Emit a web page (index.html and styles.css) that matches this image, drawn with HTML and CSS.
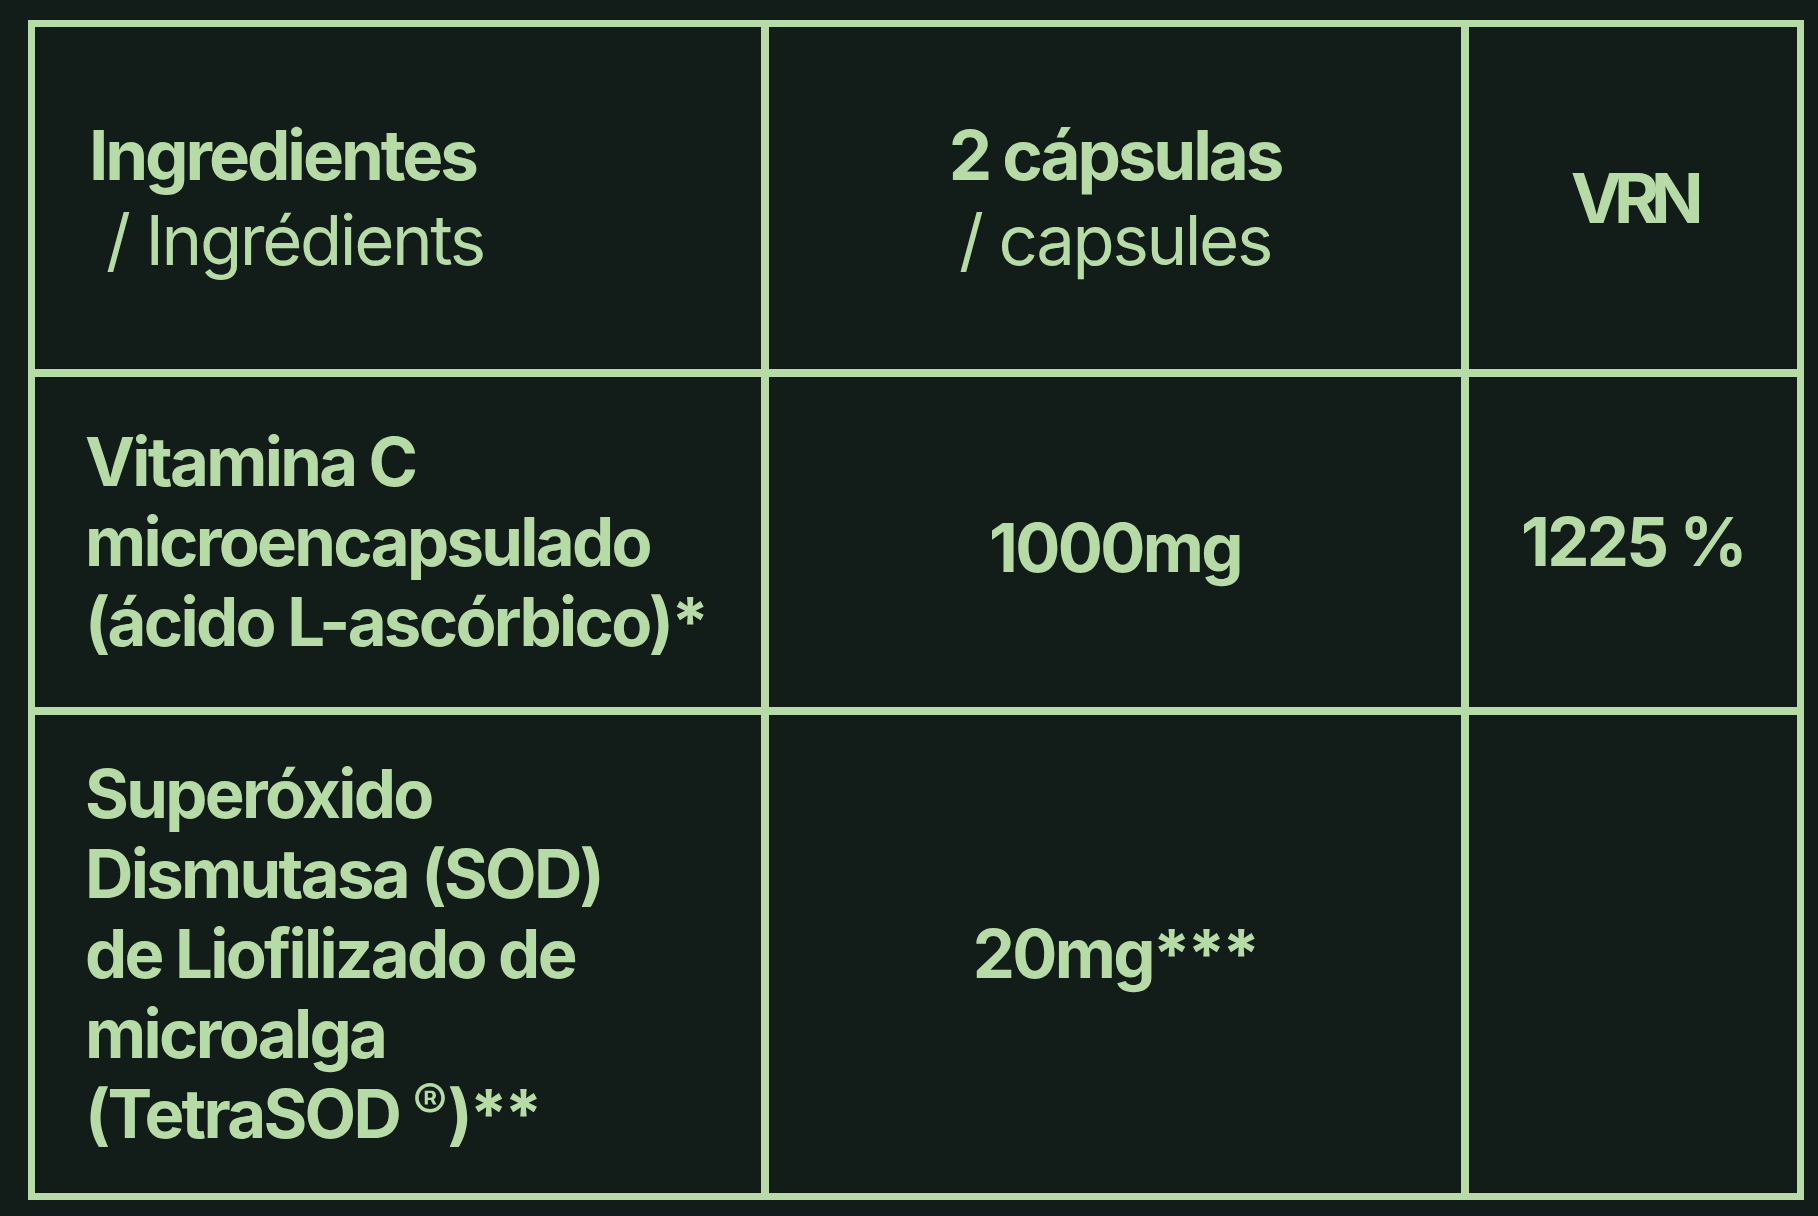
FILE: index.html
```html
<!DOCTYPE html>
<html lang="es">
<head>
<meta charset="utf-8">
<title>Ingredientes</title>
<link rel="stylesheet" href="styles.css">
</head>
<body>
<div class="table">
  <div class="cell head first">
    <p><strong>Ingredientes</strong><br><span class="light">&nbsp;/ Ingrédients</span></p>
  </div>
  <div class="cell head center">
    <p><strong>2 cápsulas</strong><br><span class="light">/ capsules</span></p>
  </div>
  <div class="cell head center">
    <p><strong class="tight">VRN</strong></p>
  </div>

  <div class="cell body first">
    <p>Vitamina C<br>microencapsulado<br>(ácido L-ascórbico)*</p>
  </div>
  <div class="cell body center nudge">
    <p>1000mg</p>
  </div>
  <div class="cell body center">
    <p>1225 %</p>
  </div>

  <div class="cell body first">
    <p>Superóxido<br>Dismutasa (SOD)<br>de Liofilizado de<br>microalga<br>(TetraSOD <sup class="reg">®</sup>)**</p>
  </div>
  <div class="cell body center">
    <p>20mg***</p>
  </div>
  <div class="cell body center">
    <p></p>
  </div>
</div>
</body>
</html>
```
FILE: styles.css
```css
html, body {
  background: #121d19;
}
body {
  margin: 0;
  padding: 20px 0 0 28px;
  font-family: "Inter", "Liberation Sans", sans-serif;
  color: #b6dba7;
}
.table {
  display: grid;
  width: max-content;
  grid-template-columns: 726px 692px 328px;
  grid-template-rows: 342px 330px 478px;
  gap: 8px;
  padding: 7px;
  background: #b6dba7;
}
.cell {
  background: #121d19;
  display: flex;
  align-items: center;
}
.cell p {
  margin: 0;
}
.first {
  padding-left: 50px;
}
.head.first {
  padding-left: 54px;
}
.center {
  justify-content: center;
  text-align: center;
}
.head {
  font-size: 69px;
  line-height: 85px;
  letter-spacing: -0.045em;
}
.head strong {
  font-weight: 700;
}
.head .light {
  font-weight: 400;
  letter-spacing: -0.035em;
}
.head .tight {
  letter-spacing: -0.12em;
}
.body {
  font-size: 67px;
  line-height: 80px;
  font-weight: 700;
  letter-spacing: -0.04em;
}
.nudge {
  padding-top: 12px;
}
.reg {
  font-size: 0.78em;
  line-height: 0;
  vertical-align: 0.32em;
  font-weight: 400;
  letter-spacing: 0;
}
```
